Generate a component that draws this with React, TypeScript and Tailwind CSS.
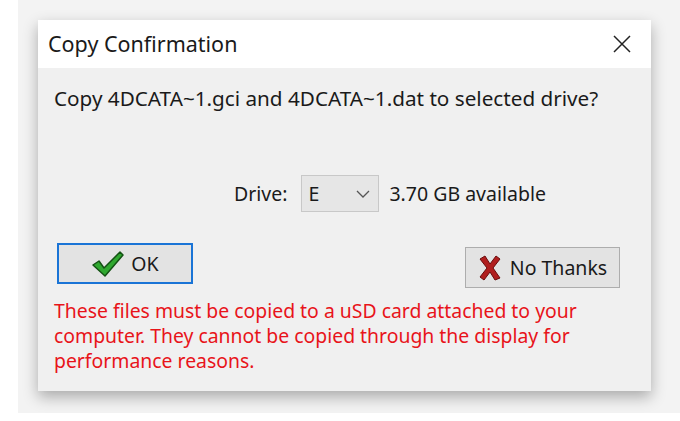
import React from "react";

const CheckIcon = () => (
  <svg width="34" height="28" viewBox="0 0 34 28">
    <path
      d="M2 15 L8 11 L13 18 L29 2 L32 5 L14 26 Z"
      fill="#2fa82f"
      stroke="#145214"
      strokeWidth="1.5"
      strokeLinejoin="round"
    />
  </svg>
);

const CrossIcon = () => (
  <svg width="24" height="26" viewBox="0 0 24 26">
    <path
      d="M2 4 L7 1 L12 9 L18 1 L22 4 L15 13 L22 23 L17 25 L12 17 L6 25 L2 22 L9 13 Z"
      fill="#b01e1e"
      stroke="#6a0c0c"
      strokeWidth="1"
      strokeLinejoin="round"
    />
  </svg>
);

export default function App() {
  return (
    <div className="h-[421px] w-[680px] bg-white font-['Noto_Sans',sans-serif]">
      <div className="ml-[18px] h-[413px] w-[662px] bg-[#f3f3f3] pt-[20px] pl-[20px]">
        <div className="flex h-[371px] w-[613px] flex-col bg-[#f0f0f0] shadow-[0_6px_14px_rgba(0,0,0,0.3)]">
          <div className="flex h-[48px] items-center justify-between bg-white pl-[10px] pr-[20px]">
            <span className="text-[21.5px] leading-[28px] text-[#1a1a1a]">Copy Confirmation</span>
            <svg width="18" height="18" viewBox="0 0 18 18">
              <path d="M1 1 L17 17 M17 1 L1 17" stroke="#222" strokeWidth="1.5" />
            </svg>
          </div>
          <div className="flex flex-1 flex-col px-[16px] pt-[16px]">
            <p className="text-[20.7px] leading-[28px] text-[#1a1a1a]">
              Copy 4DCATA~1.gci and 4DCATA~1.dat to selected drive?
            </p>
            <div className="mt-[63px] flex items-center pl-[180px] text-[19.5px] text-[#1a1a1a]">
              <span>Drive:</span>
              <div className="ml-[14px] flex h-[37px] w-[78px] items-center justify-between border border-[#c8c8c8] bg-[#e6e6e6] pl-[6px] pr-[8px]">
                <span>E</span>
                <svg width="14" height="8" viewBox="0 0 14 8">
                  <path d="M1 1 L7 7 L13 1" fill="none" stroke="#555" strokeWidth="1.3" />
                </svg>
              </div>
              <span className="ml-[10px]">3.70 GB available</span>
            </div>
            <div className="mt-[31px] flex items-start justify-between">
              <button className="ml-[3px] flex h-[41px] w-[136px] items-center justify-center gap-[6px] border-2 border-[#1a74d6] bg-[#e3e3e3] text-[19.5px] text-[#1a1a1a]">
                <CheckIcon />
                <span>OK</span>
              </button>
              <button className="mt-[4px] mr-[15px] flex h-[41px] w-[155px] items-center justify-center gap-[8px] border border-[#adadad] bg-[#e3e3e3] text-[19.5px] text-[#1a1a1a]">
                <CrossIcon />
                <span>No Thanks</span>
              </button>
            </div>
            <p className="mt-[10px] text-[19.4px] leading-[25px] text-[#e8141a]">
              These files must be copied to a uSD card attached to your
              <br />
              computer. They cannot be copied through the display for
              <br />
              performance reasons.
            </p>
          </div>
        </div>
      </div>
    </div>
  );
}
